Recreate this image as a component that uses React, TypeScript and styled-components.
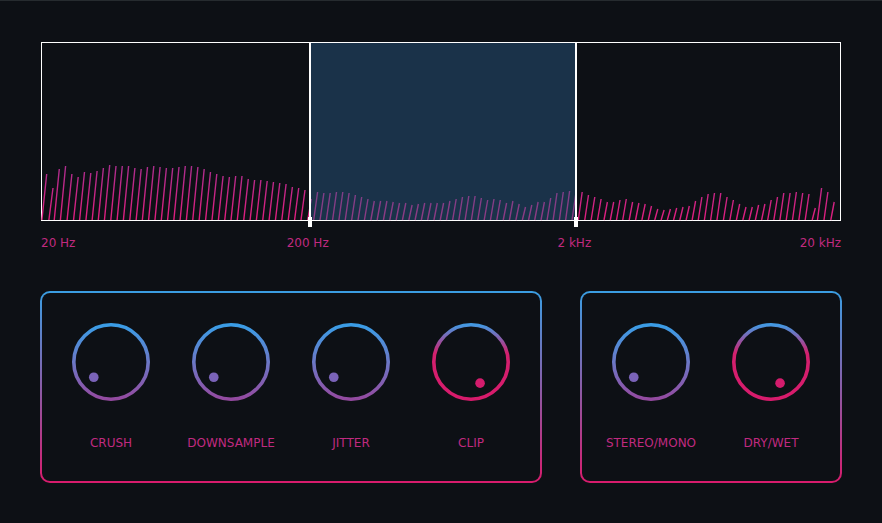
import React, { useId } from "react";
import styled, { createGlobalStyle } from "styled-components";

const GlobalStyle = createGlobalStyle`
  html, body { margin: 0; padding: 0; background: #0d1015; }
  body { font-family: "DejaVu Sans", Verdana, sans-serif; }
`;

const Page = styled.div`
  width: 882px;
  height: 523px;
  box-sizing: border-box;
  border-top: 1px solid #262b2f;
  background: #0d1015;
  padding: 41px 0 0 41px;
  display: flex;
  flex-direction: column;
`;

const SpectrumBox = styled.div`
  position: relative;
  width: 800px;
  height: 179px;
  box-sizing: border-box;
  border: 1px solid #ffffff;
  display: grid;
  grid-template-columns: 267px 268px 1fr;
`;

const SpectrumSvg = styled.svg`
  position: absolute;
  inset: 0;
  width: 100%;
  height: 100%;
  overflow: visible;
`;

const Band = styled.div`
  grid-column: 2;
  position: relative;
  box-sizing: border-box;
  background: rgba(42, 94, 137, 0.45);
  border-left: 2px solid #ffffff;
  border-right: 2px solid #ffffff;
`;

const Handle = styled.div<{ $side: "left" | "right" }>`
  position: absolute;
  bottom: -7px;
  ${(p) => (p.$side === "left" ? "left: -3px;" : "right: -3px;")}
  width: 4px;
  height: 10px;
  background: #ffffff;
`;

const Axis = styled.div`
  width: 800px;
  margin-top: 15px;
  display: grid;
  grid-template-columns: repeat(6, 1fr);
  font-size: 12px;
  line-height: 14px;
  color: #c02a80;
`;

const AxisLabel = styled.span<{ $span: number; $align: string }>`
  grid-column: span ${(p) => p.$span};
  justify-self: ${(p) => p.$align};
  white-space: nowrap;
`;

const PanelsRow = styled.div`
  display: flex;
  gap: 38px;
  margin-top: 41px;
  margin-left: -1px;
`;

const Panel = styled.div<{ $cols: number }>`
  border: 2px solid transparent;
  border-radius: 10px;
  background: linear-gradient(#0d1015, #0d1015) padding-box,
    linear-gradient(to bottom, #3a9ee2, #d81b6c) border-box;
  display: grid;
  grid-template-columns: repeat(${(p) => p.$cols}, 120px);
  padding: 29px 9px 31px;
`;

const KnobCell = styled.div`
  display: flex;
  flex-direction: column;
  align-items: center;
`;

const KnobSvg = styled.svg`
  display: block;
  width: 80px;
  height: 80px;
`;

const KnobLabel = styled.span`
  margin-top: 34px;
  font-size: 12px;
  line-height: 14px;
  color: #c02a80;
  white-space: nowrap;
`;

const tops: number[] = [
  174, 188, 169, 166, 174, 177, 172, 173, 171, 168, 165, 166, 166, 166, 168, 169, 167, 166, 167, 168, 168, 167, 166, 166,
  167, 169, 172, 174, 176, 177, 176, 176, 179, 180, 180, 181, 182, 183, 184, 187, 188, 190, 199,
  192, 193, 193, 192, 192, 193, 195, 197, 199, 201, 201, 201, 202, 203, 203, 205, 204, 203, 203, 203, 203, 201, 199,
  197, 196, 196, 198, 200, 199, 200, 203, 201, 204, 207, 205, 202, 202, 198, 193, 192, 191,
  193, 192, 195, 197, 199, 202, 202, 200, 199, 202, 203, 204, 206, 209, 210, 209, 208, 207, 206, 201, 197, 194, 193,
  193, 197, 200, 204, 207, 207, 205, 204, 200, 197, 193, 193, 192, 193, 194, 208, 188, 192, 202,
];

const Spectrum: React.FC = () => {
  const base = 177;
  const d = tops
    .map((t, i) => {
      const tx = 4.7 + i * 6.3;
      const ty = t - 43;
      const h = base - ty;
      const s = 2.5 + h * 0.05;
      return `M${(tx - s).toFixed(2)} ${base} L${tx.toFixed(2)} ${ty}`;
    })
    .join(" ");
  return (
    <SpectrumSvg viewBox="0 0 798 177" preserveAspectRatio="none">
      <defs>
        <linearGradient id="specGrad" gradientUnits="userSpaceOnUse" x1="0" y1="177" x2="0" y2="120">
          <stop offset="0" stopColor="#e01e7e" />
          <stop offset="1" stopColor="#a82e8e" />
        </linearGradient>
      </defs>
      <path d={d} stroke="url(#specGrad)" strokeWidth="1.4" fill="none" />
    </SpectrumSvg>
  );
};

type KnobProps = { label: string; angle: number; hot?: boolean };

const Knob: React.FC<KnobProps> = ({ label, angle, hot }) => {
  const id = "k" + useId().replace(/[^a-zA-Z0-9]/g, "");
  const rad = (angle * Math.PI) / 180;
  const dx = 40 + 23 * Math.sin(rad);
  const dy = 40 - 23 * Math.cos(rad);
  return (
    <KnobCell>
      <KnobSvg viewBox="0 0 80 80">
        <defs>
          <linearGradient id={id} x1="0" y1="0" x2="0" y2="1">
            {hot ? (
              <>
                <stop offset="0" stopColor="#4399e2" />
                <stop offset="0.2" stopColor="#8d5aa8" />
                <stop offset="0.38" stopColor="#d3206e" />
                <stop offset="1" stopColor="#d81b6c" />
              </>
            ) : (
              <>
                <stop offset="0" stopColor="#3a9de6" />
                <stop offset="0.5" stopColor="#6b78c6" />
                <stop offset="1" stopColor="#944aa0" />
              </>
            )}
          </linearGradient>
        </defs>
        <circle cx="40" cy="40" r="37.2" fill="none" stroke={`url(#${id})`} strokeWidth="3.6" />
        <circle cx={dx} cy={dy} r="4.8" fill={hot ? "#d41c6d" : "#7a63b8"} />
      </KnobSvg>
      <KnobLabel>{label}</KnobLabel>
    </KnobCell>
  );
};

export default function App() {
  return (
    <>
      <GlobalStyle />
      <Page>
        <SpectrumBox>
          <Spectrum />
          <Band>
            <Handle $side="left" />
            <Handle $side="right" />
          </Band>
        </SpectrumBox>
        <Axis>
          <AxisLabel $span={1} $align="start">20 Hz</AxisLabel>
          <AxisLabel $span={2} $align="center">200 Hz</AxisLabel>
          <AxisLabel $span={2} $align="center">2 kHz</AxisLabel>
          <AxisLabel $span={1} $align="end">20 kHz</AxisLabel>
        </Axis>
        <PanelsRow>
          <Panel $cols={4}>
            <Knob label="CRUSH" angle={228.5} />
            <Knob label="DOWNSAMPLE" angle={228.5} />
            <Knob label="JITTER" angle={228.5} />
            <Knob label="CLIP" angle={156.8} hot />
          </Panel>
          <Panel $cols={2}>
            <Knob label="STEREO/MONO" angle={228.5} />
            <Knob label="DRY/WET" angle={156.8} hot />
          </Panel>
        </PanelsRow>
      </Page>
    </>
  );
}
